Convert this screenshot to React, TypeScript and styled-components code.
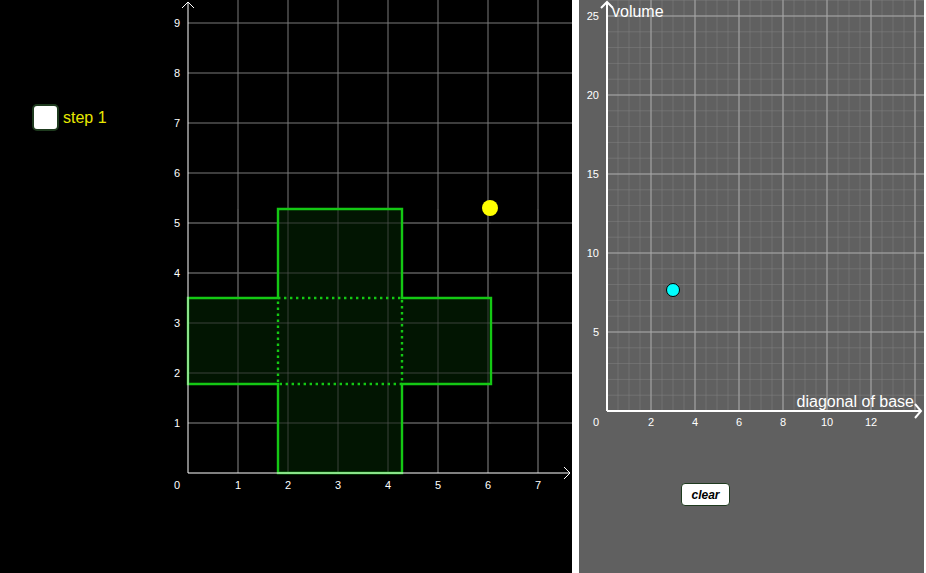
import React from "react";
import styled, { createGlobalStyle } from "styled-components";

const Global = createGlobalStyle`
  html, body { margin: 0; padding: 0; background: #fff; }
  body { font-family: "Liberation Sans", Arial, sans-serif; }
`;

const Page = styled.div`
  display: flex;
  width: 926px;
  height: 573px;
  background: #fff;
`;

const LeftPanel = styled.div`
  position: relative;
  width: 572px;
  height: 573px;
  background: #000;
  flex: none;
`;

const RightPanel = styled.div`
  position: relative;
  margin-left: 7px;
  width: 345px;
  height: 573px;
  background: #606060;
  flex: none;
`;

const Canvas = styled.svg`
  display: block;
  position: absolute;
  inset: 0;
`;

const StepToggle = styled.label`
  position: absolute;
  left: 32px;
  top: 104px;
  display: flex;
  align-items: center;
  gap: 4px;
  color: #e8e800;
  font-size: 16px;
`;

const Box = styled.span`
  width: 23px;
  height: 23px;
  background: #fff;
  border: 2px solid #1e3a1e;
  border-radius: 5px;
`;

const ClearButton = styled.button`
  position: absolute;
  left: 102px;
  top: 483px;
  width: 49px;
  height: 23px;
  background: #fff;
  border: 1px solid #1e3a1e;
  border-radius: 4px;
  font: italic bold 12px "Liberation Sans", Arial, sans-serif;
  color: #000;
  padding: 0;
`;

const range = (a: number, b: number, s = 1) => {
  const r: number[] = [];
  for (let i = a; i <= b + 1e-9; i += s) r.push(i);
  return r;
};

function LeftGraph() {
  const ox = 188, oy = 473, u = 50;
  return (
    <Canvas width={572} height={573}>
      {range(1, 7).map((i) => (
        <line key={"v" + i} x1={ox + i * u} y1={0} x2={ox + i * u} y2={oy} stroke="#7a7a7a" />
      ))}
      {range(1, 9).map((i) => (
        <line key={"h" + i} x1={ox} y1={oy - i * u} x2={572} y2={oy - i * u} stroke="#7a7a7a" />
      ))}
      <g fill="#021602" fillOpacity={0.95}>
        <rect x={188} y={298} width={303} height={86} />
        <rect x={278} y={209} width={124} height={264} />
      </g>
      {range(1, 7).map((i) => (
        <line key={"v2" + i} x1={ox + i * u} y1={209} x2={ox + i * u} y2={oy} stroke="#5a5a5a" strokeOpacity={0.6} />
      ))}
      {range(1, 5).map((i) => (
        <line key={"h2" + i} x1={ox} y1={oy - i * u} x2={491} y2={oy - i * u} stroke="#5a5a5a" strokeOpacity={0.6} />
      ))}
      <g stroke="#14c814" strokeWidth={2.4} fill="none">
        <path d="M188 298 H278 V209 H402 V298 H491 V384 H402 V473 H278 V384 H188 Z" />
        <rect x={278} y={298} width={124} height={86} strokeDasharray="2.4 3.6" />
      </g>
      <g stroke="#fff" strokeWidth={1} fill="none">
        <line x1={ox} y1={oy} x2={570} y2={oy} />
        <line x1={ox} y1={oy} x2={ox} y2={2} />
        <path d="M564 467 L570 473 L564 479" />
        <path d="M182 8 L188 2 L194 8" />
      </g>
      <g fill="#fff" fontSize={11} fontFamily="Liberation Sans, Arial, sans-serif">
        <text x={177} y={489} textAnchor="middle">0</text>
        {range(1, 7).map((i) => (
          <text key={"xl" + i} x={ox + i * u} y={489} textAnchor="middle">{i}</text>
        ))}
        {range(1, 9).map((i) => (
          <text key={"yl" + i} x={180} y={oy - i * u + 4} textAnchor="end">{i}</text>
        ))}
      </g>
      <circle cx={490} cy={208} r={8} fill="#ffff00" />
    </Canvas>
  );
}

function RightGraph() {
  const ox = 28, oy = 411, ux = 22, uy = 15.8;
  return (
    <Canvas width={345} height={573}>
      {range(0.5, 14.5, 0.5).map((i) => (
        <line key={"mv" + i} x1={ox + i * ux} y1={0} x2={ox + i * ux} y2={oy} stroke="#888" strokeOpacity={0.45} />
      ))}
      {range(1, 26).map((i) => (
        <line key={"mh" + i} x1={ox} y1={oy - i * uy} x2={345} y2={oy - i * uy} stroke="#888" strokeOpacity={0.45} />
      ))}
      {range(2, 14, 2).map((i) => (
        <line key={"v" + i} x1={ox + i * ux} y1={0} x2={ox + i * ux} y2={oy} stroke="#a8a8a8" />
      ))}
      {range(5, 25, 5).map((i) => (
        <line key={"h" + i} x1={ox} y1={oy - i * uy} x2={345} y2={oy - i * uy} stroke="#a8a8a8" />
      ))}
      <g stroke="#fff" strokeWidth={2} fill="none">
        <line x1={ox} y1={oy} x2={342} y2={oy} />
        <line x1={ox} y1={oy} x2={ox} y2={2} />
        <path d="M336 404 L342 411 L336 418" />
        <path d="M22 8 L28 2 L34 8" />
      </g>
      <g fill="#fff" fontSize={11} fontFamily="Liberation Sans, Arial, sans-serif">
        <text x={17} y={426} textAnchor="middle">0</text>
        {range(2, 12, 2).map((i) => (
          <text key={"xl" + i} x={ox + i * ux} y={426} textAnchor="middle">{i}</text>
        ))}
        {range(5, 25, 5).map((i) => (
          <text key={"yl" + i} x={20} y={oy - i * uy + 4} textAnchor="end">{i}</text>
        ))}
      </g>
      <g fill="#fff" fontSize={16} fontFamily="Liberation Sans, Arial, sans-serif">
        <text x={33} y={17}>volume</text>
        <text x={335} y={407} textAnchor="end">diagonal of base</text>
      </g>
      <circle cx={94} cy={290} r={6.5} fill="#00ffff" stroke="#000" strokeWidth={1} />
    </Canvas>
  );
}

export default function App() {
  return (
    <Page>
      <Global />
      <LeftPanel>
        <LeftGraph />
        <StepToggle>
          <Box />
          step 1
        </StepToggle>
      </LeftPanel>
      <RightPanel>
        <RightGraph />
        <ClearButton>clear</ClearButton>
      </RightPanel>
    </Page>
  );
}
